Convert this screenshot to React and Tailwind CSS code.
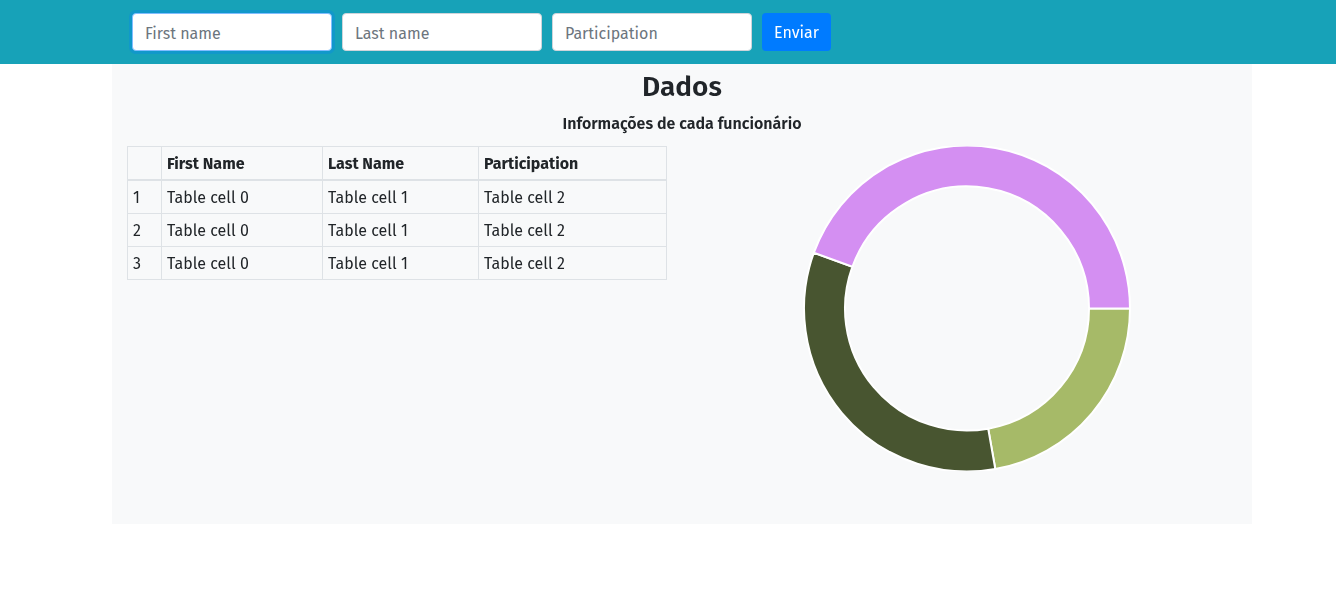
import React from "react";

// ─── Data ───────────────────────────────────────────────

const rows = [1, 2, 3];

const slices = [
  { from: 0, to: 80, color: "#a6ba68" },
  { from: 80, to: 200, color: "#485530" },
  { from: 200, to: 360, color: "#d48ff2" },
];

// ─── Doughnut ───────────────────────────────────────────

function arcPath(cx, cy, R, r, a0, a1) {
  const rad = (a) => (a * Math.PI) / 180;
  const p = (rr, a) => [cx + rr * Math.cos(rad(a)), cy + rr * Math.sin(rad(a))];
  const large = a1 - a0 > 180 ? 1 : 0;
  const [x0, y0] = p(R, a0);
  const [x1, y1] = p(R, a1);
  const [x2, y2] = p(r, a1);
  const [x3, y3] = p(r, a0);
  return `M${x0} ${y0} A${R} ${R} 0 ${large} 1 ${x1} ${y1} L${x2} ${y2} A${r} ${r} 0 ${large} 0 ${x3} ${y3} Z`;
}

function Doughnut() {
  return (
    <svg width="540" height="325" viewBox="0 0 540 325" className="block overflow-hidden">
      {slices.map((s) => (
        <path
          key={s.color}
          d={arcPath(270, 162.5, 163, 122, s.from, s.to)}
          fill={s.color}
          stroke="#ffffff"
          strokeWidth="2"
        />
      ))}
    </svg>
  );
}

// ─── App ────────────────────────────────────────────────

export default function App() {
  return (
    <div className="min-h-[597px] bg-white text-[#212529] font-['Fira_Sans','Open_Sans',sans-serif]">
      {/* ─── Header form ─── */}
      <div className="h-16 bg-[#17a2b8]">
        <div className="ml-[132px] flex items-center gap-[10px] pt-[13px]">
          <input
            autoFocus
            placeholder="First name"
            className="w-[200px] h-[38px] rounded bg-white border border-[#80bdff] px-3 pt-[2px] text-base outline-none shadow-[0_0_0_3px_rgba(0,123,255,0.25)] placeholder:text-[#6c757d]"
          />
          <input
            placeholder="Last name"
            className="w-[200px] h-[38px] rounded bg-white border border-[#ced4da] px-3 pt-[2px] text-base outline-none placeholder:text-[#6c757d]"
          />
          <input
            placeholder="Participation"
            className="w-[200px] h-[38px] rounded bg-white border border-[#ced4da] px-3 pt-[2px] text-base outline-none placeholder:text-[#6c757d]"
          />
          <button className="h-[38px] px-3 pt-[2px] rounded bg-[#007bff] text-white text-base">
            Enviar
          </button>
        </div>
      </div>

      {/* ─── Panel ─── */}
      <div className="ml-[112px] w-[1140px] h-[460px] bg-[#f8f9fa] px-[15px]">
        <h2 className="pt-[6px] text-center text-[28px] leading-[1.2] font-semibold">Dados</h2>
        <p className="mt-[8px] text-center text-base font-semibold leading-6">
          Informações de cada funcionário
        </p>

        <div className="mt-[10px] flex">
          {/* Table */}
          <div className="w-[570px] pr-[30px]">
            <table className="w-[540px] border-collapse text-base">
              <thead>
                <tr className="h-[34px]">
                  <th className="w-[34px] border border-[#dee2e6] border-b-2"></th>
                  <th className="w-[161px] border border-[#dee2e6] border-b-2 px-[5px] pt-[2px] text-left font-bold">First Name</th>
                  <th className="w-[156px] border border-[#dee2e6] border-b-2 px-[5px] pt-[2px] text-left font-bold">Last Name</th>
                  <th className="border border-[#dee2e6] border-b-2 px-[5px] pt-[2px] text-left font-bold">Participation</th>
                </tr>
              </thead>
              <tbody>
                {rows.map((n) => (
                  <tr key={n} className="h-[33px]">
                    <td className="border border-[#dee2e6] px-[5px] pt-[2px]">{n}</td>
                    <td className="border border-[#dee2e6] px-[5px] pt-[2px]">Table cell 0</td>
                    <td className="border border-[#dee2e6] px-[5px] pt-[2px]">Table cell 1</td>
                    <td className="border border-[#dee2e6] px-[5px] pt-[2px]">Table cell 2</td>
                  </tr>
                ))}
              </tbody>
            </table>
          </div>

          {/* Chart */}
          <div className="w-[540px]">
            <Doughnut />
          </div>
        </div>
      </div>
    </div>
  );
}
